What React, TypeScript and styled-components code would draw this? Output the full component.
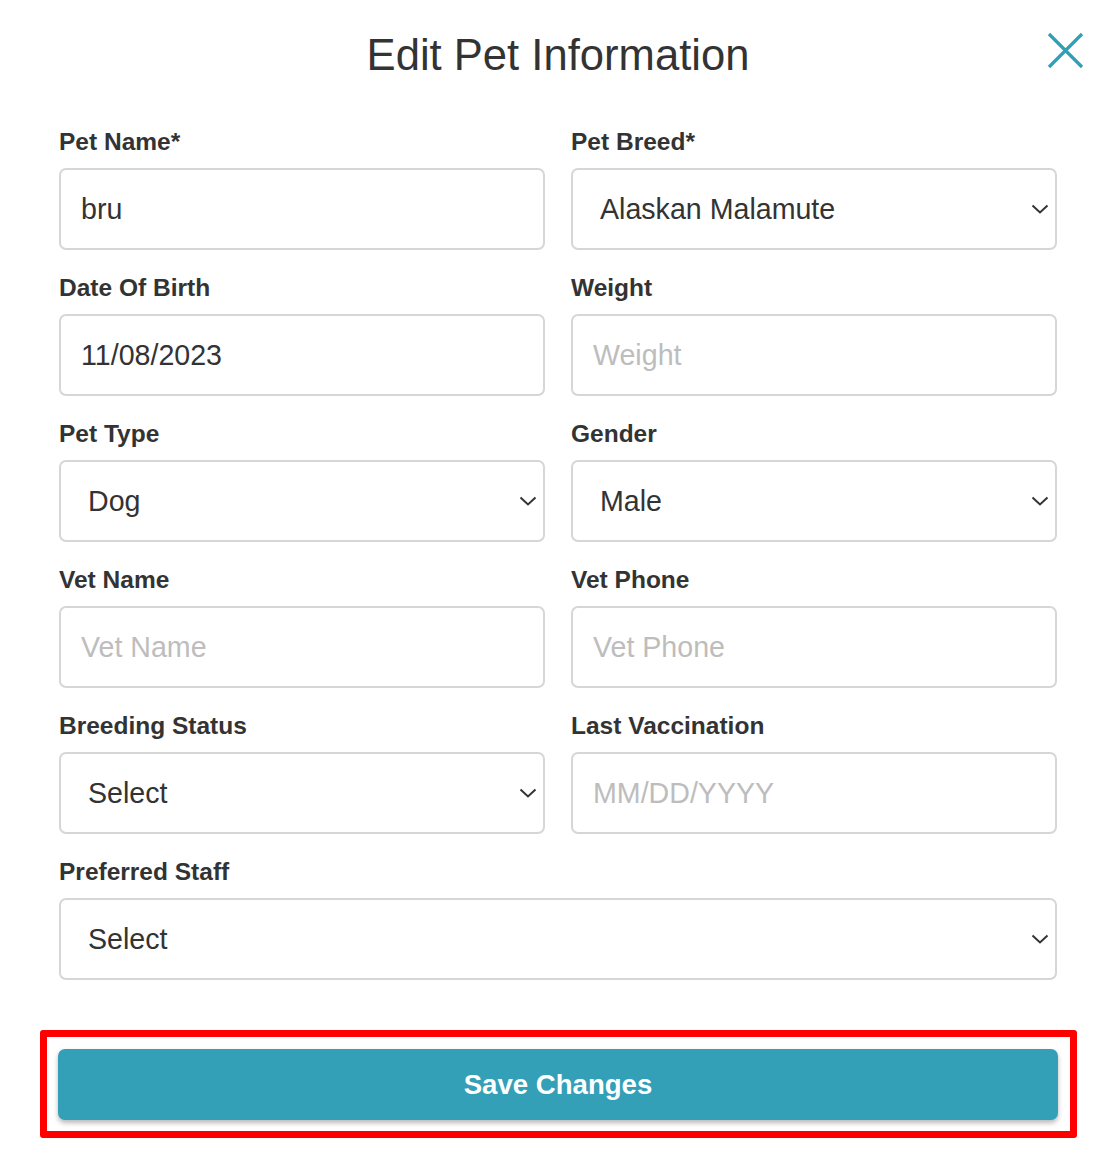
import React, { FC } from 'react'
import styled, { createGlobalStyle } from 'styled-components'

const GlobalStyle = createGlobalStyle`
  html, body {
    margin: 0;
    padding: 0;
    background: #ffffff;
  }
  body {
    font-family: "Liberation Sans", Arial, Helvetica, sans-serif;
    color: #333333;
  }
`

const Page = styled.div`
  width: 1108px;
  box-sizing: border-box;
  padding: 0 51px 0 59px;
`

const Header = styled.header`
  position: relative;
  display: flex;
  justify-content: center;
  padding-top: 28px;
  margin-bottom: 47px;
`

const Title = styled.h1`
  margin: 0;
  font-size: 43.6px;
  line-height: 54px;
  font-weight: 400;
  color: #333333;
`

const CloseButton = styled.button`
  position: absolute;
  top: 31px;
  right: -27px;
  width: 38px;
  height: 38px;
  padding: 0;
  border: none;
  background: transparent;
  display: flex;
  align-items: center;
  justify-content: center;
  cursor: pointer;
`

const FormGrid = styled.div`
  display: grid;
  grid-template-columns: 486px 486px;
  column-gap: 26px;
  row-gap: 25px;
`

const Field = styled.div<{ $full?: boolean }>`
  display: flex;
  flex-direction: column;
  gap: 13px;
  grid-column: ${({ $full }) => ($full ? '1 / -1' : 'auto')};
`

const Label = styled.label`
  font-size: 24.5px;
  line-height: 26px;
  font-weight: 700;
  color: #333333;
`

const TextInput = styled.input`
  box-sizing: border-box;
  width: 100%;
  height: 82px;
  padding: 0 20px;
  border: 2px solid #d6d6d6;
  border-radius: 7px;
  font-family: inherit;
  font-size: 28.6px;
  color: #333333;
  background: #ffffff;
  outline: none;

  &::placeholder {
    color: #bdbdbd;
  }
`

const SelectWrap = styled.div`
  position: relative;
`

const Select = styled.select`
  box-sizing: border-box;
  width: 100%;
  height: 82px;
  padding: 0 40px 0 27px;
  border: 2px solid #d6d6d6;
  border-radius: 7px;
  font-family: inherit;
  font-size: 28.6px;
  color: #333333;
  background: #ffffff;
  appearance: none;
  -webkit-appearance: none;
  outline: none;
`

const Chevron = styled.svg`
  position: absolute;
  right: 8px;
  top: 50%;
  margin-top: -5px;
  pointer-events: none;
`

const SaveArea = styled.div`
  margin: 50px -20px 0 -19px;
  padding: 12px 12px 11px 11px;
  border: 7px solid #ff0000;
  border-radius: 3px;
`

const SaveButton = styled.button`
  display: block;
  width: 1000px;
  height: 71px;
  border: none;
  border-radius: 7px;
  background: #33a0b7;
  box-shadow: 0 3px 5px rgba(0, 0, 0, 0.28);
  color: #ffffff;
  font-family: inherit;
  font-size: 27.6px;
  font-weight: 700;
  cursor: pointer;
`

const ChevronIcon: FC = () => (
  <Chevron width="18" height="10" viewBox="0 0 18 10">
    <path d="M1.5 1.5 L9 8.5 L16.5 1.5" fill="none" stroke="#333" strokeWidth="2" />
  </Chevron>
)

interface SelectFieldProps {
  label: string
  value: string
  options: string[]
  full?: boolean
}

const SelectField: FC<SelectFieldProps> = ({ label, value, options, full }) => (
  <Field $full={full}>
    <Label>{label}</Label>
    <SelectWrap>
      <Select value={value} onChange={() => undefined}>
        {options.map((o) => (
          <option key={o} value={o}>
            {o}
          </option>
        ))}
      </Select>
      <ChevronIcon />
    </SelectWrap>
  </Field>
)

interface InputFieldProps {
  label: string
  value?: string
  placeholder?: string
}

const InputField: FC<InputFieldProps> = ({ label, value, placeholder }) => (
  <Field>
    <Label>{label}</Label>
    <TextInput
      readOnly
      value={value ?? ''}
      placeholder={placeholder}
    />
  </Field>
)

const App: FC = () => (
  <Page>
    <GlobalStyle />
    <Header>
      <Title>Edit Pet Information</Title>
      <CloseButton aria-label="Close">
        <svg width="38" height="38" viewBox="0 0 38 38">
          <path d="M3 3 L36 36 M36 3 L3 36" stroke="#2fa0b5" strokeWidth="3.2" fill="none" />
        </svg>
      </CloseButton>
    </Header>

    <FormGrid>
      <InputField label="Pet Name*" value="bru" />
      <SelectField label="Pet Breed*" value="Alaskan Malamute" options={['Alaskan Malamute', 'Akita', 'Beagle']} />
      <InputField label="Date Of Birth" value="11/08/2023" />
      <InputField label="Weight" placeholder="Weight" />
      <SelectField label="Pet Type" value="Dog" options={['Dog', 'Cat']} />
      <SelectField label="Gender" value="Male" options={['Male', 'Female']} />
      <InputField label="Vet Name" placeholder="Vet Name" />
      <InputField label="Vet Phone" placeholder="Vet Phone" />
      <SelectField label="Breeding Status" value="Select" options={['Select', 'Intact', 'Neutered']} />
      <InputField label="Last Vaccination" placeholder="MM/DD/YYYY" />
      <SelectField label="Preferred Staff" value="Select" options={['Select']} full />
    </FormGrid>

    <SaveArea>
      <SaveButton>Save Changes</SaveButton>
    </SaveArea>
  </Page>
)

export default App
